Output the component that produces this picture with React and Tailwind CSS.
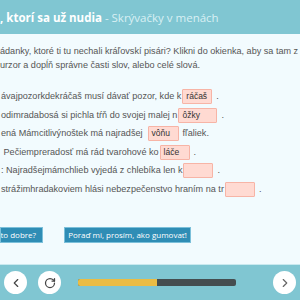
import React from "react";
import { ChevronLeft, ChevronRight, RotateCw } from "lucide-react";

const rows = [
  { pre: "ávajpozorkdekráčaš musí dávať pozor, kde k", val: "ráčaš", w: "w-[30px]", post: "." },
  { pre: "odimradabosá si pichla tŕň do svojej malej n", val: "ôžky", w: "w-[39px]", post: "." },
  { pre: "ená Mámcitlivýnoštek má najradšej", val: "vôňu", w: "w-[31px]", post: "fľaliek.", sp: true },
  { pre: "\u00a0Pečiempreradosť má rád tvarohové ko", val: "láče", w: "w-[30px]", post: "." },
  { pre: ": Najradšejmámchlieb vyjedá z chlebíka len k", val: "", w: "w-[30px]", post: "." },
  { pre: "strážimhradakoviem hlási nebezpečenstvo hraním na tr", val: "", w: "w-[30px]", post: "." },
];

export default function App() {
  return (
    <div className="w-[300px] h-[300px] overflow-hidden bg-[#f2fbfe] flex flex-col font-['Liberation_Sans',Arial,sans-serif]">
      <div className="h-[34px] shrink-0 bg-[#80c6d2] flex items-center whitespace-nowrap font-['Open_Sans',sans-serif] text-[11.5px] pt-[1px]">
        <span className="font-bold text-white">, ktorí sa už nudia</span>
        <span className="text-[#d9f0f4]">&nbsp;- Skrývačky v menách</span>
      </div>
      <div className="flex-1 flex flex-col whitespace-nowrap text-[#555] text-[9.1px]">
        <div className="pt-[10px] leading-[14px]">
          <div>ádanky, ktoré ti tu nechali kráľovskí pisári? Klikni do okienka, aby sa tam z</div>
          <div>urzor a dopĺň správne časti slov, alebo celé slová.</div>
        </div>
        <div className="pt-[17px] flex flex-col">
          {rows.map((r, i) => (
            <div key={i} className="h-[18.6px] flex items-start pl-[1px]">
              <span className="leading-[15px]">{r.pre}</span>
              {r.sp && <span className="w-[4px]" />}
              <span className={`${r.w} h-[15px] ml-[1px] mr-[4px] bg-[#ffdad2] border border-[#f7b4a6] rounded-[1px] text-[#333] text-[8.5px] leading-[13px] pl-[3px]`}>{r.val}</span>
              <span className="leading-[15px]">{r.post}</span>
            </div>
          ))}
        </div>
        <div className="mt-[26px] flex items-start font-['Open_Sans',sans-serif] text-[8px] text-white">
          <div className="w-[43px] h-[16px] bg-[#2f8db5] border border-[#7cc0da] flex items-center justify-end pr-[6px] overflow-hidden">to dobre?</div>
          <div className="ml-[21px] w-[127px] h-[16px] bg-[#2f8db5] border border-[#7cc0da] flex items-center justify-center">Poraď mi, prosím, ako gumovať!</div>
        </div>
      </div>
      <div className="h-[36px] shrink-0 bg-[#80c6d2] border-t border-[#c9e9ef] flex items-center pl-[4px] pr-[4px]">
        <div className="w-[23px] h-[23px] rounded-full bg-white flex items-center justify-center">
          <ChevronLeft size={14} strokeWidth={2} color="#444" />
        </div>
        <div className="ml-[11px] w-[23px] h-[23px] rounded-full bg-white flex items-center justify-center">
          <RotateCw size={12} strokeWidth={2.5} color="#444" />
        </div>
        <div className="ml-[17px] w-[158px] h-[7px] rounded-[2px] bg-[#454d50] overflow-hidden flex">
          <div className="w-[79px] h-full bg-[#eabc44]" />
        </div>
        <div className="ml-auto w-[23px] h-[23px] rounded-full bg-white flex items-center justify-center">
          <ChevronRight size={14} strokeWidth={2} color="#666" />
        </div>
      </div>
    </div>
  );
}
